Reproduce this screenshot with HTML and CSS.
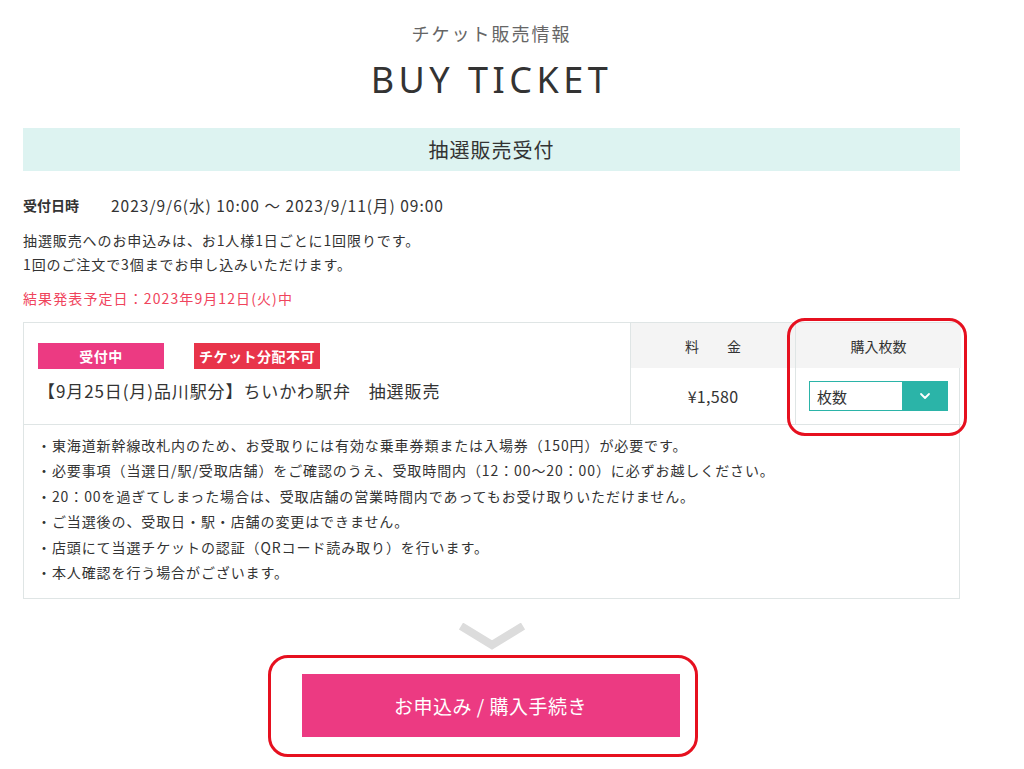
FILE: index.html
```html
<!DOCTYPE html>
<html lang="ja">
<head>
    <meta charset="UTF-8">
    <meta name="viewport" content="width=device-width, initial-scale=1.0">
    <title>BUY TICKET</title>
    <link rel="stylesheet" href="styles.css">
</head>
<body>
    <div class="page">
        <div class="heading">
            <p class="heading-sub">チケット販売情報</p>
            <h1 class="heading-main">BUY TICKET</h1>
        </div>

        <div class="band">抽選販売受付</div>

        <div class="period">
            <span class="period-label">受付日時</span>
            <span class="period-value">2023/9/6(水) 10:00 〜 2023/9/11(月) 09:00</span>
        </div>

        <p class="lead">抽選販売へのお申込みは、お1人様1日ごとに1回限りです。<br>1回のご注文で3個までお申し込みいただけます。</p>

        <p class="result">結果発表予定日：2023年9月12日(火)中</p>

        <div class="ticket">
            <div class="ticket-main">
                <div class="badges">
                    <span class="badge badge-open">受付中</span>
                    <span class="badge badge-nosplit">チケット分配不可</span>
                </div>
                <p class="ticket-title">【9月25日(月)品川駅分】ちいかわ駅弁　抽選販売</p>
            </div>
            <div class="cell-head">料　　金</div>
            <div class="cell-head cell-qty-head">購入枚数</div>
            <div class="cell-body price">¥1,580</div>
            <div class="cell-body cell-qty">
                <div class="select">
                    <span class="select-text">枚数</span>
                    <span class="select-arrow">
                        <svg width="12" height="8" viewBox="0 0 12 8"><path d="M2 2 L6 6 L10 2" fill="none" stroke="#fff" stroke-width="1.8" stroke-linecap="round" stroke-linejoin="round"/></svg>
                    </span>
                </div>
            </div>
            <div class="qty-mark"></div>

            <ul class="notes">
                <li>・東海道新幹線改札内のため、お受取りには有効な乗車券類または入場券（150円）が必要です。</li>
                <li>・必要事項（当選日/駅/受取店舗）をご確認のうえ、受取時間内（12：00〜20：00）に必ずお越しください。</li>
                <li>・20：00を過ぎてしまった場合は、受取店舗の営業時間内であってもお受け取りいただけません。</li>
                <li>・ご当選後の、受取日・駅・店舗の変更はできません。</li>
                <li>・店頭にて当選チケットの認証（QRコード読み取り）を行います。</li>
                <li>・本人確認を行う場合がございます。</li>
            </ul>
        </div>

        <div class="next">
            <svg class="next-arrow" width="68" height="28" viewBox="0 0 68 28"><path d="M3 3 L34 22 L65 3" fill="none" stroke="#dcdcdc" stroke-width="8"/></svg>
            <div class="submit-mark">
                <button class="submit">お申込み / 購入手続き</button>
            </div>
        </div>
    </div>
</body>
</html>
```

FILE: styles.css
```css
:root {
    --text: #333;
    --line: #dfe5e5;
    --head-bg: #f4f4f4;
    --teal: #2bb4a8;
    --pink: #ec3a82;
    --red: #e8344a;
    --mark: #e6101f;
}

body {
    margin: 0;
    background: #fff;
    color: var(--text);
    font-family: "Noto Sans CJK JP", "Noto Sans", sans-serif;
}

p, h1, ul {
    margin: 0;
}

.page {
    width: 937px;
    margin-left: 23px;
}

.heading {
    display: flex;
    flex-direction: column;
    align-items: center;
    padding-top: 20px;
}

.heading-sub {
    font-size: 18px;
    line-height: 27px;
    letter-spacing: 2px;
    color: #666;
}

.heading-main {
    font-family: "Noto Sans", sans-serif;
    font-size: 36px;
    font-weight: 400;
    line-height: 44px;
    letter-spacing: 4.5px;
    margin-top: 11px;
    color: #333;
}

.band {
    margin-top: 26px;
    height: 43px;
    display: flex;
    align-items: center;
    justify-content: center;
    background: #ddf3f1;
    font-size: 20px;
    letter-spacing: 1px;
}

.period {
    display: flex;
    align-items: center;
    margin-top: 23px;
    height: 22px;
}

.period-label {
    width: 88px;
    font-size: 14px;
    font-weight: 700;
}

.period-value {
    font-size: 15.5px;
    letter-spacing: 1px;
}

.lead {
    margin-top: 12px;
    font-size: 14px;
    line-height: 24px;
    letter-spacing: 0.9px;
}

.result {
    margin-top: 10px;
    font-size: 14px;
    line-height: 24px;
    letter-spacing: 1.1px;
    color: #f0445c;
}

.ticket {
    position: relative;
    margin-top: 12px;
    display: grid;
    grid-template-columns: 607px 164px 166px;
    grid-template-rows: 45px 57px auto;
    border: 1px solid var(--line);
    box-sizing: border-box;
}

.ticket-main {
    grid-row: 1 / 3;
    padding: 20px 14px 0;
    border-right: 1px solid var(--line);
    border-bottom: 1px solid var(--line);
}

.badges {
    display: flex;
    gap: 30px;
}

.badge {
    width: 126px;
    height: 26px;
    display: flex;
    align-items: center;
    justify-content: center;
    font-size: 14px;
    font-weight: 700;
    color: #fff;
    letter-spacing: 0.5px;
}

.badge-open {
    background: var(--pink);
}

.badge-nosplit {
    background: var(--red);
}

.ticket-title {
    margin-top: 8px;
    font-size: 17px;
    line-height: 28px;
    letter-spacing: 0.9px;
}

.cell-head {
    display: flex;
    align-items: center;
    justify-content: center;
    background: var(--head-bg);
    font-size: 14px;
}

.cell-qty-head,
.cell-qty {
    border-left: 1px solid var(--line);
}

.cell-body {
    display: flex;
    align-items: center;
    border-bottom: 1px solid var(--line);
}

.price {
    justify-content: center;
    font-size: 16px;
    letter-spacing: 0.3px;
}

.cell-qty {
    padding-left: 13px;
}

.select {
    width: 139px;
    height: 30px;
    display: flex;
    border: 1px solid var(--teal);
    box-sizing: border-box;
}

.select-text {
    flex: 1;
    display: flex;
    align-items: center;
    padding-left: 7px;
    font-size: 15px;
}

.select-arrow {
    width: 45px;
    display: flex;
    align-items: center;
    justify-content: center;
    background: var(--teal);
}

.qty-mark {
    position: absolute;
    left: 763px;
    top: -5px;
    width: 180px;
    height: 118px;
    border: 3px solid var(--mark);
    border-radius: 18px;
    box-sizing: border-box;
}

.notes {
    grid-column: 1 / 4;
    list-style: none;
    padding: 8px 13px 13px;
    font-size: 14px;
    line-height: 25.4px;
    letter-spacing: 0.9px;
}

.next {
    display: flex;
    flex-direction: column;
    align-items: center;
    margin-top: 24px;
}

.next-arrow {
    display: block;
}

.submit-mark {
    margin-top: 4px;
    margin-right: 18px;
    padding: 16px 15px 17px 31px;
    border: 3px solid var(--mark);
    border-radius: 20px;
}

.submit {
    display: block;
    width: 378px;
    height: 63px;
    border: 0;
    background: var(--pink);
    color: #fff;
    font-family: "Noto Sans CJK JP", sans-serif;
    font-size: 19px;
    letter-spacing: 0.5px;
    cursor: pointer;
}
```
